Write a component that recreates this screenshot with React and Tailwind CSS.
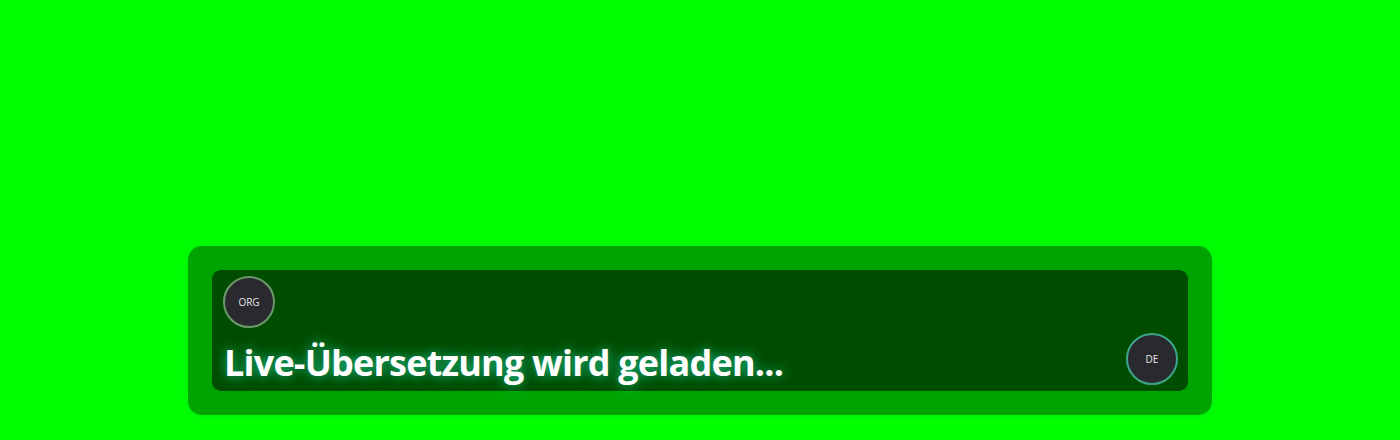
import React from "react";

export default function App() {
  return (
    <div className="w-[1400px] h-[440px] bg-[#00ff00] flex flex-col items-center justify-end pb-[25px]" style={{ fontFamily: '"Open Sans", "Noto Sans", sans-serif' }}>
      <div className="w-[1024px] h-[169px] rounded-[14px] bg-[#00a400] p-6 shadow-[0_0_10px_rgba(0,220,40,0.45)]">
        <div className="h-full rounded-[9px] bg-[#004d00] flex flex-col justify-between pl-[11px] pr-2.5 pt-1.5 pb-1.5">
          <div className="w-[52px] h-[52px] rounded-full bg-[#2a2a2e] border-2 border-[#6a9a6a] flex items-center justify-center text-[10px] text-[#e5e7eb]">
            ORG
          </div>
          <div className="flex items-end justify-between">
            <div className="text-[36px] leading-[40px] font-bold text-white tracking-[-0.8px] [text-shadow:0_0_12px_rgba(30,210,160,0.9)] pl-[1px] pb-[2px]">
              Live-Übersetzung wird geladen...
            </div>
            <div className="w-[52px] h-[52px] rounded-full bg-[#2a2a2e] border-2 border-[#3aa58a] flex items-center justify-center text-[10px] text-[#e5e7eb]">
              DE
            </div>
          </div>
        </div>
      </div>
    </div>
  );
}
